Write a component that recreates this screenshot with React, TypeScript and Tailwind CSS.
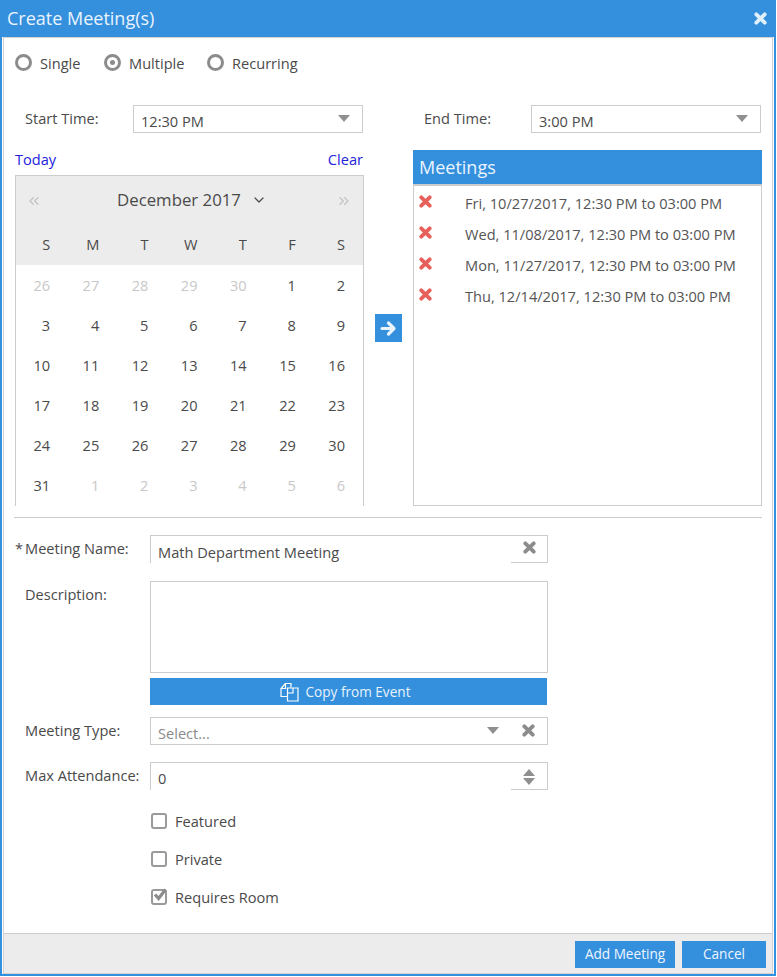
import React from "react";
import { ChevronDown, ChevronsLeft, ChevronsRight } from "lucide-react";

const Caret = () => (
  <svg width="12" height="7" viewBox="0 0 12 7" className="block">
    <path d="M0 0h12L6 7z" fill="#8f8f8f" />
  </svg>
);

const Sort = () => (
  <svg width="12" height="16" viewBox="0 0 12 16" className="block">
    <path d="M6 0l6 7H0zM0 9h12l-6 7z" fill="#8f8f8f" />
  </svg>
);

const XIcon = ({ color, size = 13 }: { color: string; size?: number }) => (
  <svg width={size} height={size} viewBox="0 0 13 13" className="block">
    <path d="M2.3 2.3l8.4 8.4M10.7 2.3l-8.4 8.4" stroke={color} strokeWidth="3.8" strokeLinecap="round" fill="none" />
  </svg>
);

const ArrowIcon = () => (
  <svg width="17" height="17" viewBox="0 0 17 17" className="block">
    <path d="M2 8.5h11M8.5 3l5.5 5.5L8.5 14" stroke="#eaf4fd" strokeWidth="3.2" strokeLinecap="round" strokeLinejoin="round" fill="none" />
  </svg>
);

const CheckIcon = () => (
  <svg width="16" height="15" viewBox="0 0 16 15" className="block">
    <path d="M3 7.5l3.6 4L13.5 2.5" stroke="#8c8c8c" strokeWidth="3.2" fill="none" />
  </svg>
);

const CopyIcon = () => (
  <svg width="19" height="20" viewBox="0 0 19 20" fill="none" stroke="#fff" strokeWidth="1.2" className="block">
    <path d="M5.5 1.5h5.5v4M5.5 1.5L1 6.5v8h6" />
    <path d="M1 6.5h4.5v-5" />
    <path d="M7.5 6h10.5v13H7.5zM13 6v5H7.8" />
  </svg>
);

const Radio = ({ checked, label, className }: { checked?: boolean; label: string; className: string }) => (
  <div className={`flex items-center ${className}`}>
    <span className="flex h-[17px] w-[17px] items-center justify-center rounded-full border-[3px] border-[#8c8c8c]">
      {checked && <span className="h-[5px] w-[5px] rounded-full bg-[#8c8c8c]" />}
    </span>
    <span className="relative top-px ml-2">{label}</span>
  </div>
);

const Select = ({ value }: { value: string }) => (
  <div className="flex h-7 w-[230px] items-center justify-between border border-[#ccc] pl-[7px] pr-[12px]">
    <span className="relative top-[3px]">{value}</span>
    <span className="relative -top-[1px]"><Caret /></span>
  </div>
);

const weeks = [
  [26, 27, 28, 29, 30, 1, 2],
  [3, 4, 5, 6, 7, 8, 9],
  [10, 11, 12, 13, 14, 15, 16],
  [17, 18, 19, 20, 21, 22, 23],
  [24, 25, 26, 27, 28, 29, 30],
  [31, 1, 2, 3, 4, 5, 6],
];

const Calendar = () => (
  <div className="h-[331px] w-[349px] border-x border-t border-[#ccc]">
    <div className="bg-[#ececec]">
      <div className="flex h-[49px] items-center justify-between pl-[10px] pr-[11px]">
        <ChevronsLeft size={16} strokeWidth={2} className="text-[#c4c4c4]" />
        <div className="-mt-[2px] ml-[6px] flex items-center text-[16.8px]">
          December 2017
          <ChevronDown size={16} strokeWidth={1.8} className="ml-[10px]" />
        </div>
        <ChevronsRight size={16} strokeWidth={2} className="text-[#c4c4c4]" />
      </div>
      <div className="grid h-[40px] grid-cols-7 items-center pl-px pr-[2px]">
        {["S", "M", "T", "W", "T", "F", "S"].map((d, i) => (
          <div key={i} className="pr-[16px] text-right">{d}</div>
        ))}
      </div>
    </div>
    {weeks.map((w, r) => (
      <div key={r} className="grid h-[40px] grid-cols-7 items-center pl-px pr-[2px] pt-[2px]">
        {w.map((d, c) => {
          const other = (r === 0 && d > 20) || (r === 5 && d < 10);
          return (
            <div key={c} className={`pr-[16px] text-right ${other ? "text-[#c8c8c8]" : ""}`}>{d}</div>
          );
        })}
      </div>
    ))}
  </div>
);

const meetings = [
  "Fri, 10/27/2017, 12:30 PM to 03:00 PM",
  "Wed, 11/08/2017, 12:30 PM to 03:00 PM",
  "Mon, 11/27/2017, 12:30 PM to 03:00 PM",
  "Thu, 12/14/2017, 12:30 PM to 03:00 PM",
];

const Row = ({ label, className, children }: { label: React.ReactNode; className?: string; children: React.ReactNode }) => (
  <div className={`flex ${className ?? ""}`}>
    <div className="w-[135px] pl-[10px]">{label}</div>
    {children}
  </div>
);

const OpenInput = ({ value, icon, iconClass, textClass }: { value: string; icon: React.ReactNode; iconClass: string; textClass: string }) => (
  <div className="relative flex h-7 w-[398px] items-center justify-between border-x border-t border-[#ccc] pl-[7px]">
    <span className={`relative ${textClass}`}>{value}</span>
    <span className={`absolute bottom-0 right-0 flex h-[27px] w-[36px] items-center justify-center border-b border-[#ccc] ${iconClass}`}>
      {icon}
    </span>
  </div>
);

const Check = ({ label, checked, className }: { label: string; checked?: boolean; className: string }) => (
  <div className={`relative flex h-[18px] items-center pl-[151px] ${className}`}>
    <span className="h-[16px] w-[16px] rounded-[3px] border-2 border-[#9a9a9a]" />
    {checked && <span className="absolute left-[152px] -top-[1px]"><CheckIcon /></span>}
    <span className="relative top-px ml-2">{label}</span>
  </div>
);

export default function App() {
  return (
    <div className="h-[977px] w-[777px] bg-white pb-px pr-px font-['Open_Sans',sans-serif] text-[14.6px] text-[#4a4a4a]">
      <div className="flex h-full flex-col border-x-2 border-b-2 border-[#348fdd]">
        <div className="-mx-[2px] flex h-[37px] shrink-0 items-center justify-between bg-[#348fdd] pl-[7px] pr-[9px] text-[18px] text-[#eaf4fd]">
          <span>Create Meeting(s)</span>
          <XIcon color="#dfeffc" />
        </div>
        <div className="mx-px flex min-h-0 flex-1 flex-col border border-[#d2d2d2]">
          <div className="flex-1 pl-[11px] pr-[10px]">
            <div className="flex h-[50px] items-center">
              <Radio label="Single" className="w-[89px]" />
              <Radio checked label="Multiple" className="w-[103px]" />
              <Radio label="Recurring" className="" />
            </div>
            <div className="mt-[17px] flex h-[28px]">
              <div className="w-[118px] pl-[10px] leading-[26px]">Start Time:</div>
              <Select value="12:30 PM" />
              <div className="ml-[61px] w-[107px] leading-[26px]">End Time:</div>
              <Select value="3:00 PM" />
            </div>
            <div className="mt-[17px] flex h-[356px]">
              <div className="w-[349px]">
                <div className="flex h-[25px] items-start justify-between text-[#2222dd]">
                  <span className="-mt-[1px]">Today</span>
                  <span className="-mt-[1px] pr-px">Clear</span>
                </div>
                <Calendar />
              </div>
              <div className="flex w-[49px] flex-col pl-[11px] pt-[164px]">
                <div className="flex h-7 w-[27px] items-center justify-center bg-[#348fdd]">
                  <ArrowIcon />
                </div>
              </div>
              <div className="h-[356px] w-[349px]">
                <div className="flex h-[36px] items-center border-b-2 border-[#ccc] bg-[#348fdd] pl-[6px] text-[18px] text-[#eaf4fd]">Meetings</div>
                <div className="h-[320px] border-x border-b border-[#ccc] pt-[2px]">
                  {meetings.map((m) => (
                    <div key={m} className="flex h-[31px] items-center pl-[5px]">
                      <span className="-mt-[4px]"><XIcon color="#e8605b" /></span>
                      <span className="ml-[33px] text-[#555]">{m}</span>
                    </div>
                  ))}
                </div>
              </div>
            </div>
            <div className="-ml-px mt-[11px] h-px w-[748px] bg-[#ccc]" />
            <Row className="mt-[17px]" label={<span className="-ml-[10px] flex leading-[26px]"><span className="w-[10px]">*</span>Meeting Name:</span>}>
              <OpenInput value="Math Department Meeting" icon={<XIcon color="#8c8c8c" />} iconClass="pb-[3px]" textClass="top-[3px]" />
            </Row>
            <Row className="mt-[18px]" label={<span className="relative top-[3px]">Description:</span>}>
              <div className="h-[92px] w-[398px] border border-[#ccc]" />
            </Row>
            <Row className="mt-[5px]" label="">
              <div className="flex h-[27px] w-[397px] items-center justify-center bg-[#348fdd] pr-[7px] text-[13.6px] text-[#e8f3fc]">
                <CopyIcon />
                <span className="relative top-px ml-[7px]">Copy from Event</span>
              </div>
            </Row>
            <Row className="mt-[12px]" label={<span className="leading-[26px]">Meeting Type:</span>}>
              <div className="flex h-7 w-[398px] items-center border border-[#ccc] pl-[7px] pr-[12px]">
                <span className="relative top-[3px] flex-1 text-[#8a8a8a]">Select...</span>
                <span className="relative -top-[1px] mr-[23px]"><Caret /></span>
                <span className="relative -top-[1px]"><XIcon color="#8c8c8c" /></span>
              </div>
            </Row>
            <Row className="mt-[17px]" label={<span className="leading-[26px]">Max Attendance:</span>}>
              <OpenInput value="0" icon={<Sort />} iconClass="pt-[1px]" textClass="top-[2px]" />
            </Row>
            <Check label="Featured" className="mt-[22px] -ml-[15px]" />
            <Check label="Private" className="mt-[20px] -ml-[15px]" />
            <Check label="Requires Room" checked className="mt-[20px] -ml-[15px]" />
          </div>
          <div className="flex h-[40px] shrink-0 items-start justify-end gap-[7px] border-t border-[#ccc] bg-[#ececec] pr-[6px] pt-[7px] text-[13.6px] text-[#eef6fd]">
            <div className="flex h-[27px] w-[100px] items-center justify-center bg-[#348fdd]">Add Meeting</div>
            <div className="flex h-[27px] w-[84px] items-center justify-center bg-[#348fdd]">Cancel</div>
          </div>
        </div>
      </div>
    </div>
  );
}
